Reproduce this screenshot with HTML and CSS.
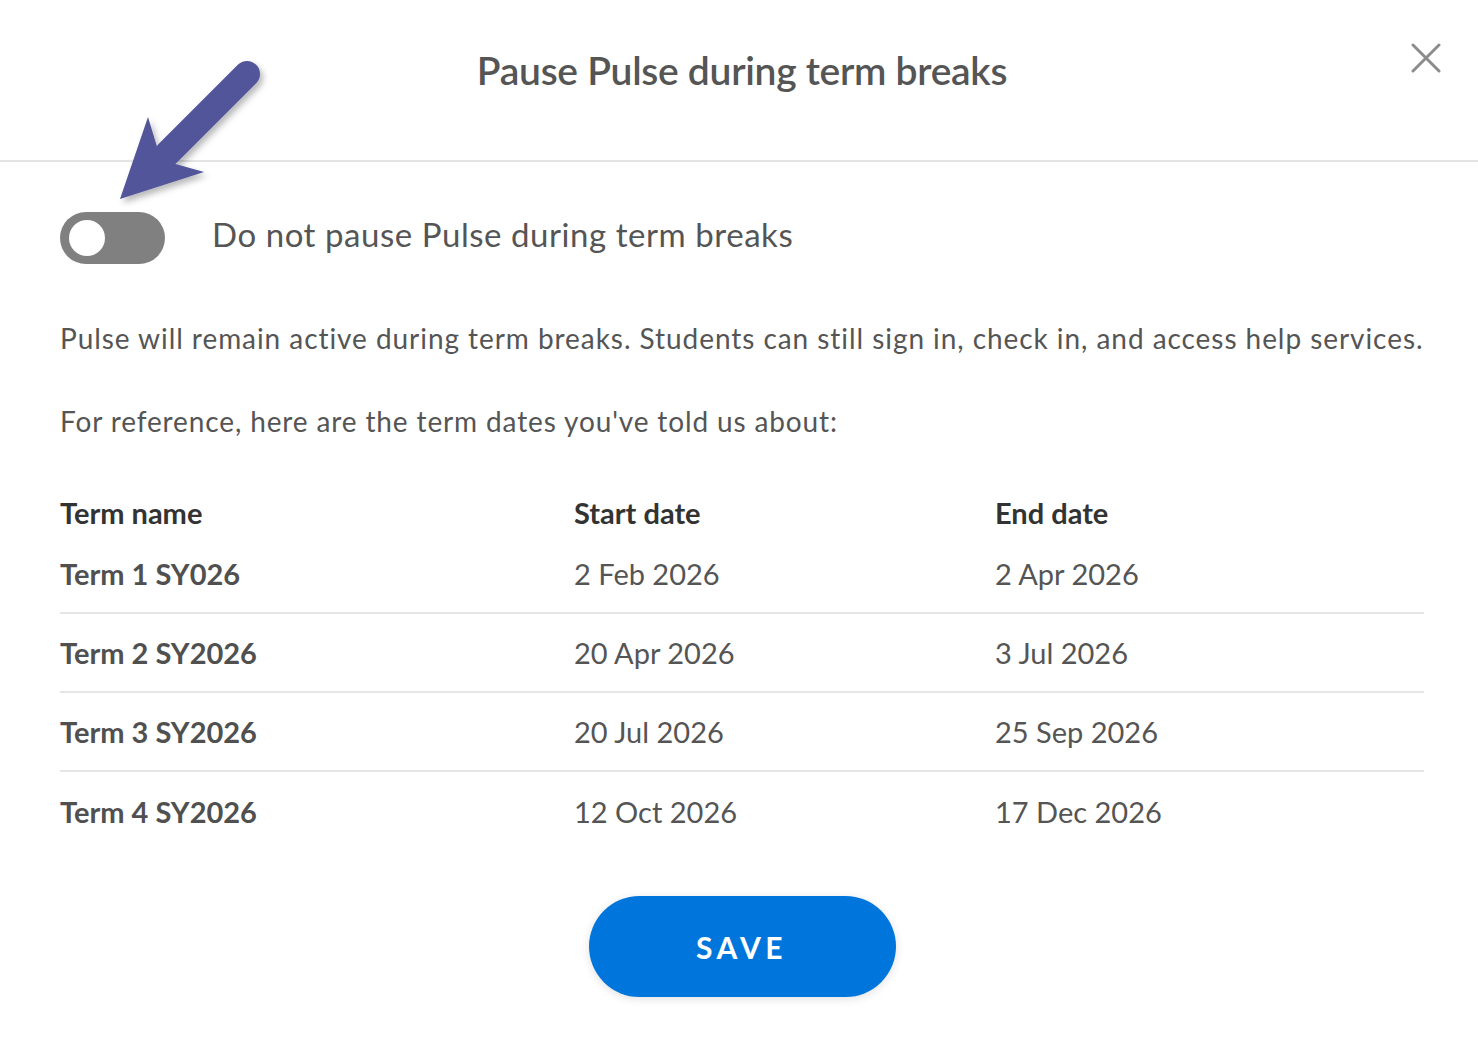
FILE: index.html
```html
<!DOCTYPE html>
<html lang="en">
<head>
<meta charset="utf-8">
<title>Pause Pulse during term breaks</title>
<link rel="stylesheet" href="styles.css">
</head>
<body>
<div class="modal">
  <header class="modal-header">
    <h1 class="modal-title">Pause Pulse during term breaks</h1>
    <button class="close-btn" aria-label="Close">
      <svg width="30" height="30" viewBox="0 0 30 30"><path d="M2 2 L28 28 M28 2 L2 28" stroke="#8c8c8c" stroke-width="3" stroke-linecap="round" fill="none"/></svg>
    </button>
  </header>
  <div class="modal-body">
    <div class="toggle-row">
      <span class="toggle"><span class="knob"></span></span>
      <span class="toggle-label">Do not pause Pulse during term breaks</span>
    </div>
    <p class="para first">Pulse will remain active during term breaks. Students can still sign in, check in, and access help services.</p>
    <p class="para second">For reference, here are the term dates you've told us about:</p>
    <div class="terms">
      <div class="row head">
        <span>Term name</span><span>Start date</span><span>End date</span>
      </div>
      <div class="row">
        <span class="name">Term 1 SY026</span><span>2 Feb 2026</span><span>2 Apr 2026</span>
      </div>
      <div class="row">
        <span class="name">Term 2 SY2026</span><span>20 Apr 2026</span><span>3 Jul 2026</span>
      </div>
      <div class="row">
        <span class="name">Term 3 SY2026</span><span>20 Jul 2026</span><span>25 Sep 2026</span>
      </div>
      <div class="row last">
        <span class="name">Term 4 SY2026</span><span>12 Oct 2026</span><span>17 Dec 2026</span>
      </div>
    </div>
    <div class="actions">
      <button class="save-btn">SAVE</button>
    </div>
  </div>
  <svg class="annotation" width="300" height="230" viewBox="0 0 300 230">
    <defs>
      <filter id="sh" x="-20%" y="-20%" width="150%" height="150%">
        <feDropShadow dx="3" dy="4" stdDeviation="3" flood-color="#000" flood-opacity="0.28"/>
      </filter>
    </defs>
    <g filter="url(#sh)" fill="#52559a">
      <path d="M247 74 L168 153" stroke="#52559a" stroke-width="26" stroke-linecap="round"/>
      <polygon points="120,199 148,117 158,150 172,163 204,172"/>
    </g>
  </svg>
</div>
</body>
</html>
```
FILE: styles.css
```css
* { box-sizing: border-box; }
html, body { margin: 0; padding: 0; background: #fff; }
body {
  font-family: "Lato", "Open Sans", sans-serif;
  color: #555;
}
.modal {
  position: relative;
  width: 1478px;
  min-height: 1038px;
  background: #fff;
}
.modal-header {
  position: relative;
  height: 162px;
  border-bottom: 2px solid #e4e4e4;
  padding-top: 45px;
  padding-left: 6px;
  text-align: center;
}
.modal-title {
  margin: 0;
  font-size: 39px;
  line-height: 50px;
  font-weight: 600;
  color: #555;
  letter-spacing: -0.3px;
}
.close-btn {
  position: absolute;
  top: 43px;
  right: 37px;
  width: 30px;
  height: 30px;
  padding: 0;
  border: 0;
  background: transparent;
  cursor: pointer;
}
.close-btn svg { display: block; }
.modal-body {
  padding: 50px 54px 0 60px;
}
.toggle-row {
  display: flex;
  align-items: center;
  height: 52px;
}
.toggle {
  display: flex;
  align-items: center;
  width: 105px;
  height: 52px;
  border-radius: 26px;
  background: #808080;
  padding-left: 9px;
  flex-shrink: 0;
}
.knob {
  width: 36px;
  height: 36px;
  border-radius: 50%;
  background: #fff;
}
.toggle-label {
  margin-left: 47px;
  font-size: 33px;
  letter-spacing: 0.55px;
  color: #555;
  line-height: 40px;
  margin-top: -8px;
}
.para {
  margin: 0;
  font-size: 28px;
  letter-spacing: 0.9px;
  line-height: 40px;
  color: #555;
  white-space: nowrap;
}
.para.first { margin-top: 54px; letter-spacing: 0.94px; }
.para.second { margin-top: 43px; letter-spacing: 0.87px; }
.terms { margin-top: 49px; }
.row {
  display: grid;
  grid-template-columns: 514px 421px 1fr;
  align-items: center;
  height: 79px;
  border-bottom: 2px solid #e6e6e6;
  font-size: 29px;
  color: #555;
}
.row.head {
  height: 45px;
  border-bottom: 0;
  font-weight: 700;
  color: #333;
}
.row.last { border-bottom: 0; }
.row .name { font-weight: 700; color: #505050; }
.actions {
  display: flex;
  justify-content: center;
  margin-top: 45px;
}
.save-btn {
  width: 307px;
  height: 101px;
  border: 0;
  border-radius: 51px;
  background: #0076dc;
  color: #fff;
  font-family: "Lato", "Open Sans", sans-serif;
  font-size: 30px;
  font-weight: 700;
  letter-spacing: 4.5px;
  padding-left: 5px;
  box-shadow: 0 2px 10px rgba(0,0,0,0.12);
}
.annotation {
  position: absolute;
  left: 0;
  top: 0;
  pointer-events: none;
}
```
